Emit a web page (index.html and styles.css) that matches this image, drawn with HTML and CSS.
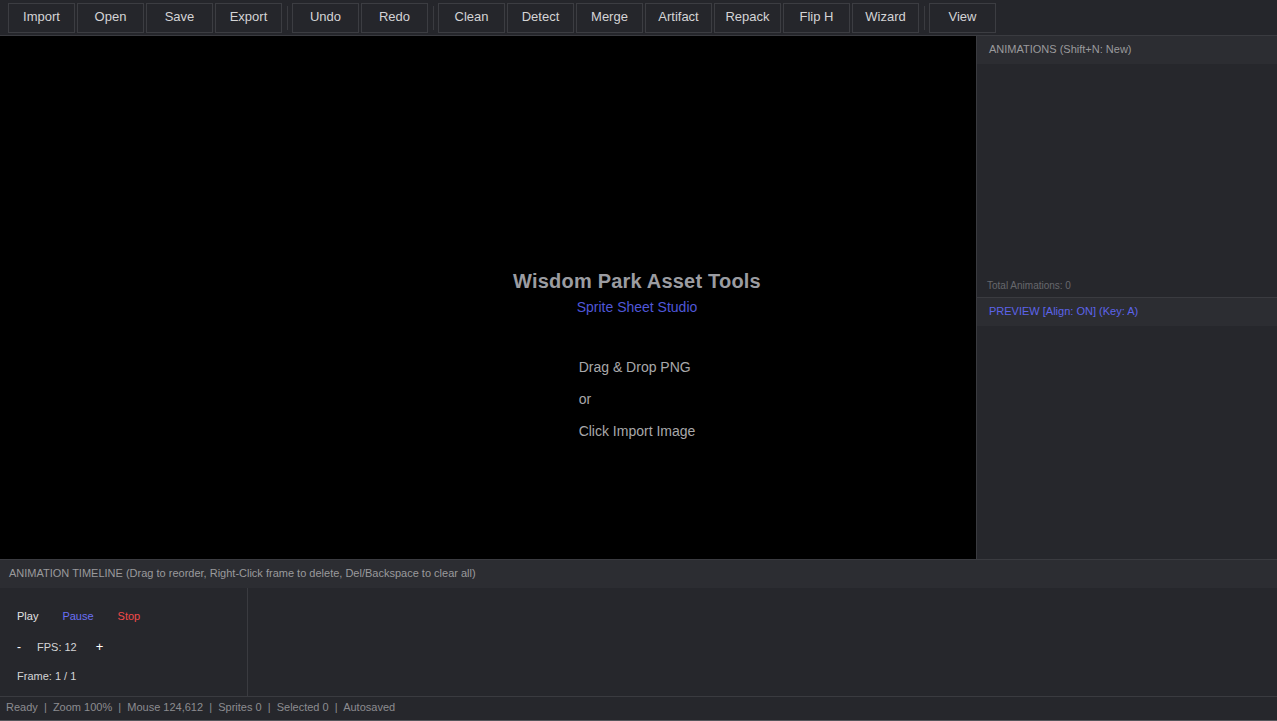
FILE: index.html
```html
<!DOCTYPE html>
<html>
<head>
<meta charset="utf-8">
<title>Wisdom Park Asset Tools</title>
<link rel="stylesheet" href="styles.css">
</head>
<body>
<div class="app">
  <div class="toolbar">
    <button class="btn">Import</button>
    <button class="btn">Open</button>
    <button class="btn">Save</button>
    <button class="btn">Export</button>
    <span class="sep"></span>
    <button class="btn">Undo</button>
    <button class="btn">Redo</button>
    <span class="sep"></span>
    <button class="btn">Clean</button>
    <button class="btn">Detect</button>
    <button class="btn">Merge</button>
    <button class="btn">Artifact</button>
    <button class="btn">Repack</button>
    <button class="btn">Flip H</button>
    <button class="btn">Wizard</button>
    <span class="sep"></span>
    <button class="btn">View</button>
  </div>
  <div class="main">
    <div class="canvas"></div>
    <div class="side">
      <div class="anim">
        <div class="panel-head">ANIMATIONS (Shift+N: New)</div>
        <div class="anim-list">
          <div class="total">Total Animations: 0</div>
        </div>
      </div>
      <div class="preview">
        <div class="panel-head blue">PREVIEW [Align: ON] (Key: A)</div>
        <div class="preview-body"></div>
      </div>
    </div>
  </div>
  <div class="timeline">
    <div class="tl-head">ANIMATION TIMELINE (Drag to reorder, Right-Click frame to delete, Del/Backspace to clear all)</div>
    <div class="tl-body">
      <div class="controls">
        <div class="row play-row">
          <span class="play">Play</span>
          <span class="pause">Pause</span>
          <span class="stop">Stop</span>
        </div>
        <div class="row fps-row">
          <span class="minus">-</span>
          <span class="fps">FPS: 12</span>
          <span class="plus">+</span>
        </div>
        <div class="row frame-row">Frame: 1 / 1</div>
      </div>
      <div class="frames"></div>
    </div>
  </div>
  <div class="status">Ready  |  Zoom 100%  |  Mouse 124,612  |  Sprites 0  |  Selected 0  |  Autosaved</div>
  <div class="welcome">
    <div class="title">Wisdom Park Asset Tools</div>
    <div class="subtitle">Sprite Sheet Studio</div>
    <div class="hint">
      <div>Drag &amp; Drop PNG</div>
      <div>or</div>
      <div>Click Import Image</div>
    </div>
  </div>
</div>
</body>
</html>
```
FILE: styles.css
```css
* { box-sizing: border-box; }
html, body {
  margin: 0;
  padding: 0;
  height: 100%;
  background: #26272c;
  font-family: "Liberation Sans", Arial, sans-serif;
  overflow: hidden;
}
.app {
  position: relative;
  display: flex;
  flex-direction: column;
  height: 721px;
  width: 1277px;
}
.toolbar {
  display: flex;
  align-items: flex-start;
  gap: 2px;
  height: 36px;
  padding: 3px 8px 0 8px;
  background: #25262b;
  border-bottom: 1px solid #3a3b40;
}
.btn {
  width: 67px;
  height: 30px;
  margin: 0;
  padding: 0 0 3px 0;
  background: #25262b;
  border: 1px solid #3c3d42;
  color: #d4d4d6;
  font-family: "Liberation Sans", Arial, sans-serif;
  font-size: 13px;
}
.sep {
  width: 1px;
  height: 24px;
  margin: 3px 2px 0 3px;
  background: #3a3b40;
}
.main {
  flex: 1;
  display: flex;
  min-height: 0;
}
.canvas {
  flex: 1;
  background: #000;
}
.side {
  width: 301px;
  border-left: 1px solid #3a3b40;
  display: flex;
  flex-direction: column;
  background: #26272c;
}
.anim {
  height: 262px;
  display: flex;
  flex-direction: column;
  border-bottom: 1px solid #3a3b40;
}
.panel-head {
  height: 28px;
  line-height: 26px;
  padding-left: 12px;
  background: #2c2d32;
  color: #9a9a9c;
  font-size: 11px;
}
.panel-head.blue { color: #5d64ea; }
.anim-list {
  flex: 1;
  display: flex;
  flex-direction: column;
  justify-content: flex-end;
  padding: 0 10px 4px 10px;
}
.total {
  font-size: 10px;
  line-height: 14px;
  color: #67686c;
}
.preview {
  flex: 1;
  display: flex;
  flex-direction: column;
}
.preview-body { flex: 1; }
.timeline {
  border-top: 1px solid #3a3b40;
  display: flex;
  flex-direction: column;
}
.tl-head {
  height: 28px;
  line-height: 26px;
  padding-left: 9px;
  background: #2c2d32;
  color: #9a9a9c;
  font-size: 11px;
}
.tl-body {
  height: 108px;
  display: flex;
  background: #26272c;
}
.controls {
  width: 248px;
  border-right: 1px solid #3a3b40;
  padding: 21px 0 0 17px;
  font-size: 11px;
  line-height: 14px;
}
.row {
  display: flex;
  align-items: center;
}
.play-row { gap: 24px; }
.play { color: #e2e2e4; }
.pause { color: #6a70f4; }
.stop { color: #f04a4a; }
.fps-row { margin-top: 17px; color: #d4d4d6; }
.minus { width: 20px; color: #ffffff; font-size: 12px; }
.plus { margin-left: 19px; color: #ffffff; font-size: 13px; }
.frame-row { margin-top: 15px; color: #d4d4d6; }
.frames { flex: 1; }
.status {
  height: 25px;
  border-top: 1px solid #3a3b40;
  border-bottom: 1px solid #55565b;
  padding-left: 6px;
  line-height: 20px;
  font-size: 11px;
  color: #8c8c90;
  white-space: pre;
  background: #26272c;
}
.welcome {
  position: absolute;
  top: 268px;
  left: 0;
  right: 3px;
  text-align: center;
  pointer-events: none;
}
.title {
  font-size: 20px;
  font-weight: bold;
  line-height: 26px;
  color: #9b9ca1;
  letter-spacing: 0.2px;
}
.subtitle {
  margin-top: 4px;
  font-size: 14px;
  line-height: 18px;
  color: #4f57d8;
}
.hint {
  display: inline-block;
  text-align: left;
  margin-top: 35px;
  font-size: 14px;
  line-height: 32px;
  color: #a8a8aa;
}
```
